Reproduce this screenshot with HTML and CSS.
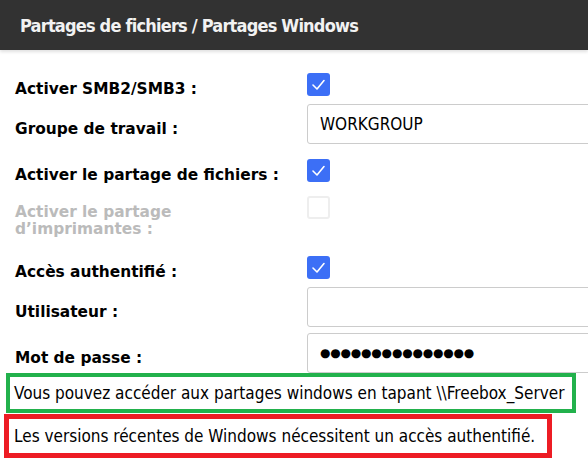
FILE: index.html
```html
<!DOCTYPE html>
<html lang="fr">
<head>
  <meta charset="UTF-8">
  <title>Partages Windows</title>
  <link rel="stylesheet" href="styles.css">
</head>
<body>

  <!-- Titre -->
  <div class="topbar">Partages de fichiers / Partages Windows</div>

  <!-- Formulaire -->
  <div class="settings">
    <div class="row row-sm">
      <label>Activer SMB2/SMB3 :</label>
      <span class="check"><svg viewBox="0 0 23 23"><path d="M6 12 L10 16 L17 7.5" /></svg></span>
    </div>
    <div class="row row-md">
      <label>Groupe de travail :</label>
      <input class="field" type="text" value="WORKGROUP">
    </div>
    <div class="row row-md">
      <label>Activer le partage de fichiers :</label>
      <span class="check"><svg viewBox="0 0 23 23"><path d="M6 12 L10 16 L17 7.5" /></svg></span>
    </div>
    <div class="row row-tall disabled">
      <label>Activer le partage<br>d’imprimantes :</label>
      <span class="check off"></span>
    </div>
    <div class="row row-sm">
      <label>Accès authentifié :</label>
      <span class="check"><svg viewBox="0 0 23 23"><path d="M6 12 L10 16 L17 7.5" /></svg></span>
    </div>
    <div class="row row-md">
      <label>Utilisateur :</label>
      <input class="field" type="text" value="">
    </div>
    <div class="row row-md">
      <label>Mot de passe :</label>
      <input class="field dots" type="text" value="●●●●●●●●●●●●●●●" readonly>
    </div>
  </div>

  <!-- Remarques -->
  <div class="note note-green">Vous pouvez accéder aux partages windows en tapant \\Freebox_Server</div>
  <div class="note note-red">Les versions récentes de Windows nécessitent un accès authentifié.</div>

</body>
</html>
```

FILE: styles.css
```css
html, body {
  overflow: hidden;
}

body {
  margin: 0;
  background: #fff;
  font-family: "DejaVu Sans", Verdana, sans-serif;
  color: #000;
}

.topbar {
  height: 50px;
  display: flex;
  align-items: center;
  padding-left: 20px;
  background: #323232;
  color: #f2f2f2;
  font-family: "DejaVu Sans Condensed", "DejaVu Sans", sans-serif;
  font-weight: bold;
  font-size: 18px;
  letter-spacing: -0.8px;
  box-shadow: 0 2px 3px rgba(0, 0, 0, 0.12);
}

.settings {
  padding-top: 17px;
}

.row {
  display: grid;
  grid-template-columns: 307px 1fr;
  align-items: center;
}

.row label {
  padding-left: 15px;
  padding-top: 10px;
  font-weight: bold;
  font-size: 15.4px;
  line-height: 17px;
}

.row-sm   { height: 34px; }
.row-md   { height: 46px; }
.row-tall { height: 57px; align-items: start; padding-top: 3px; box-sizing: border-box; }

.row-tall label { padding-top: 8px; }

.disabled label {
  color: #bbb;
}

.check {
  display: block;
  width: 23px;
  height: 23px;
  box-sizing: border-box;
  border-radius: 3px;
  background: #3c6ff6;
}

.check svg {
  display: block;
  width: 23px;
  height: 23px;
  fill: none;
  stroke: #fff;
  stroke-width: 1.6;
  stroke-linecap: round;
  stroke-linejoin: round;
}

.check.off {
  background: #fff;
  border: 2px solid #eee;
}

.field {
  width: 320px;
  height: 40px;
  box-sizing: border-box;
  margin: 0;
  padding: 0 12px;
  border: 1px solid #ccc;
  border-radius: 3px;
  font-family: "DejaVu Sans Condensed", "DejaVu Sans", sans-serif;
  font-size: 17px;
  color: #000;
  outline: none;
}

.dots {
  font-family: "DejaVu Sans", sans-serif;
  font-size: 12px;
  letter-spacing: -0.2px;
}

.note {
  width: fit-content;
  box-sizing: border-box;
  display: flex;
  align-items: center;
  background: #fff;
  font-family: "DejaVu Sans Condensed", "DejaVu Sans", sans-serif;
  font-size: 17px;
  position: relative;
}

.note-green {
  margin: -3px 0 0 6px;
  height: 40px;
  padding: 0 8px 0 4px;
  border: 4px solid #22b14c;
}

.note-red {
  margin: 1px 0 0 4px;
  height: 44px;
  padding: 0 12px 0 5px;
  border: 5px solid #ed1c24;
}
```
